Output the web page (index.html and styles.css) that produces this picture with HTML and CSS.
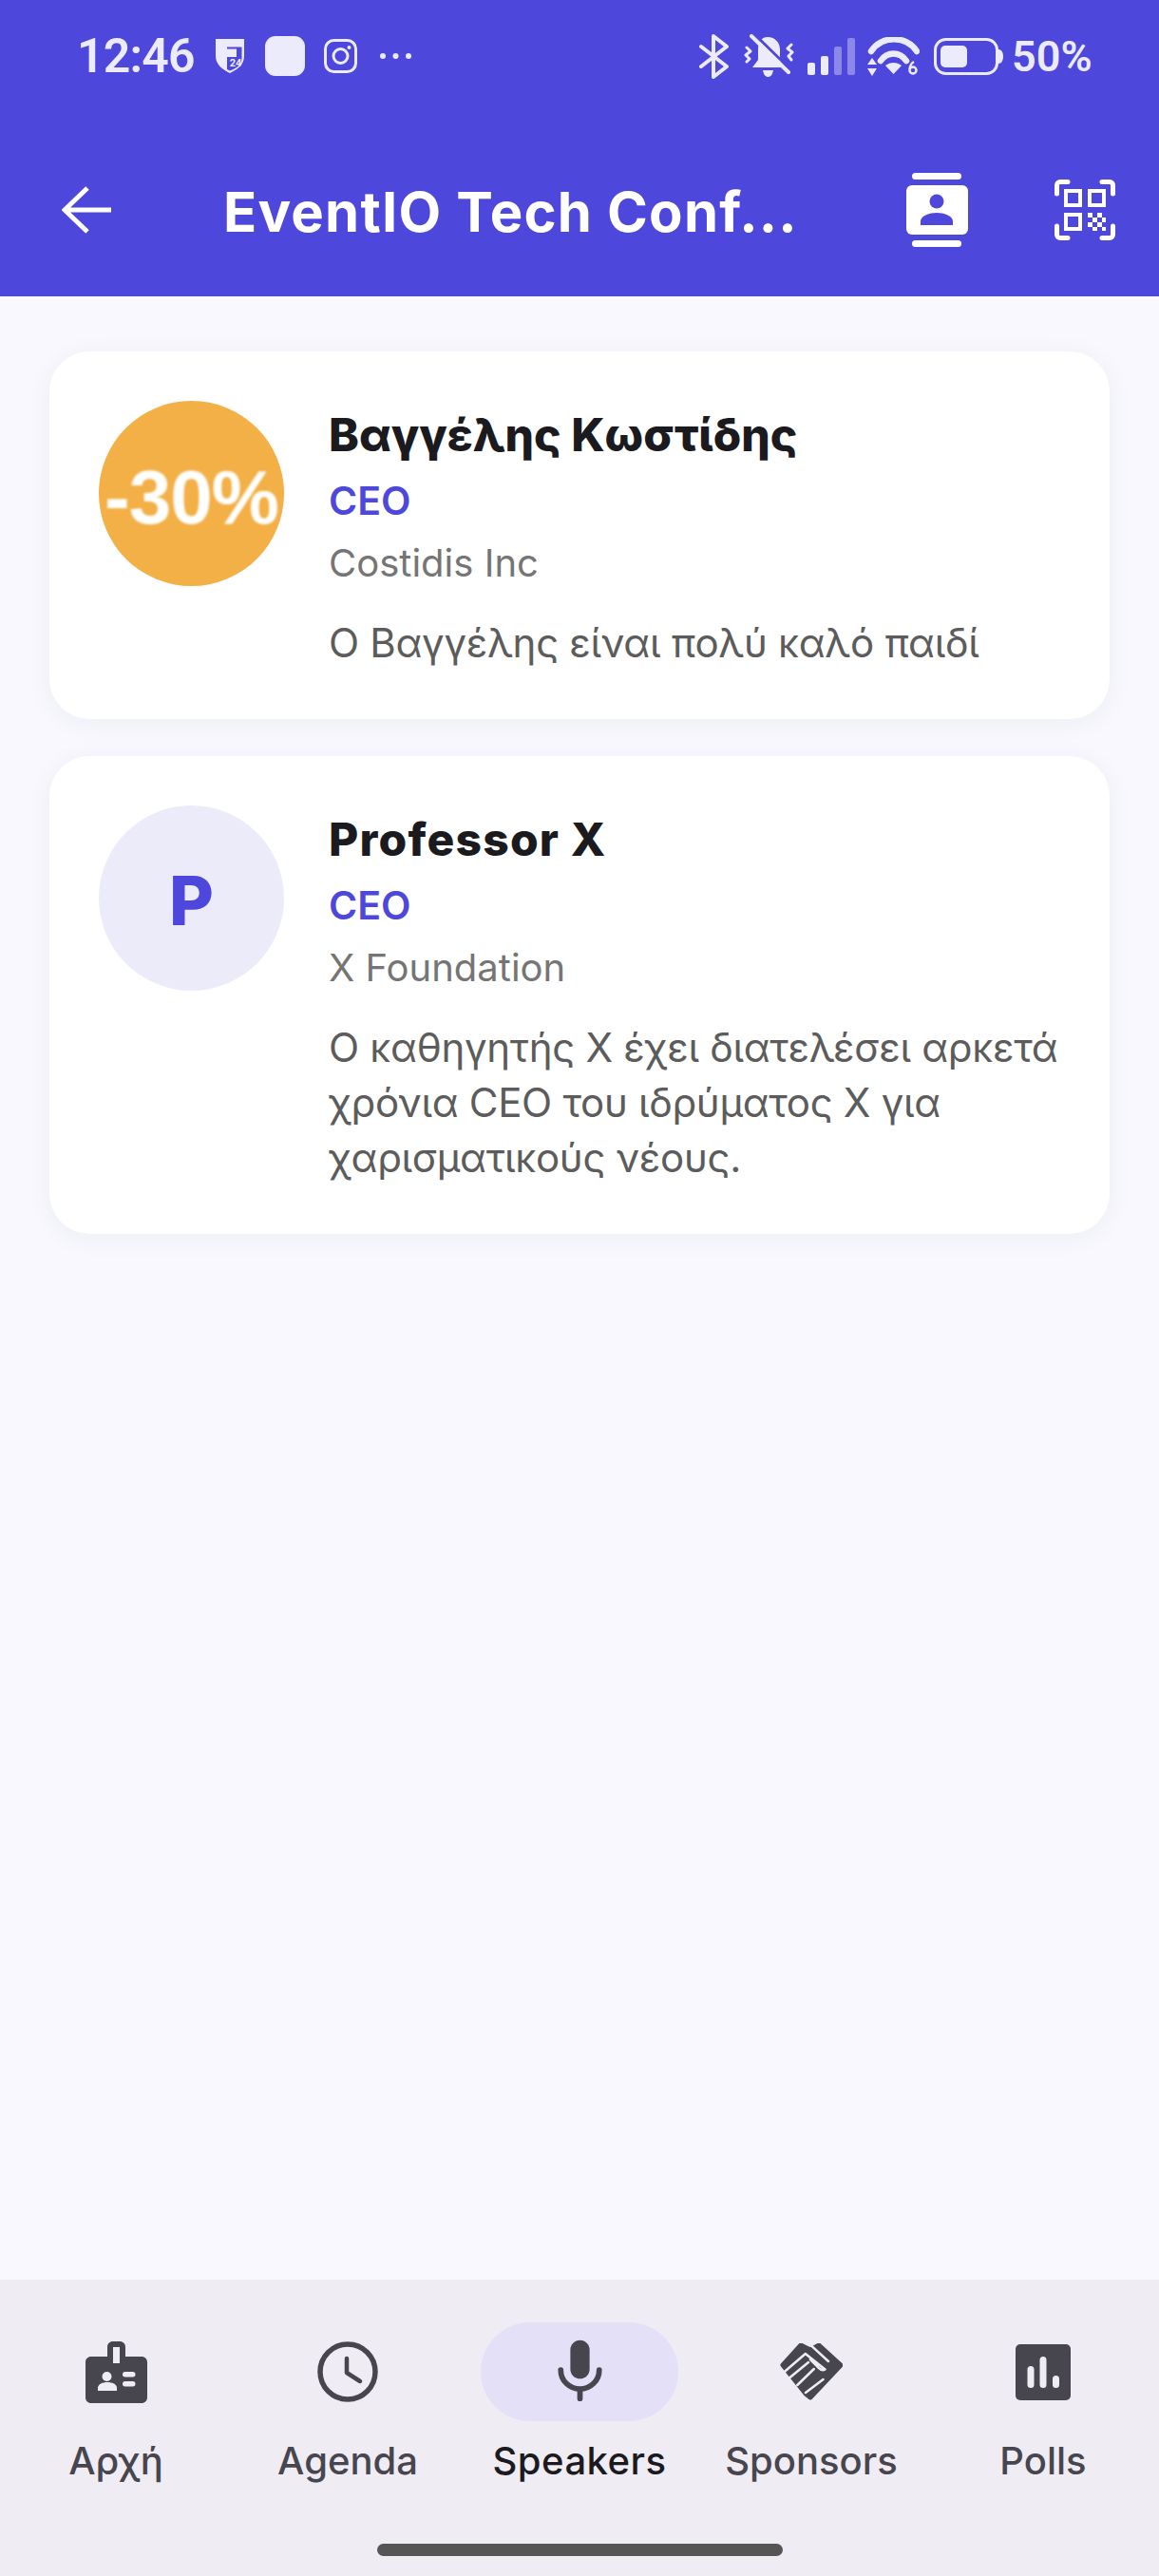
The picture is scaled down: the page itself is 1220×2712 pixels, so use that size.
FILE: index.html
```html
<!DOCTYPE html>
<html lang="el">
<head>
<meta charset="utf-8">
<title>EventIO Tech Conf</title>
<link rel="stylesheet" href="styles.css">
</head>
<body>
<div class="app">
  <header class="header">
    <div class="status">
      <span class="time">12:46</span>
      <svg class="st-shield" width="30" height="36" viewBox="0 0 30 36"><path class="lt" d="M0 0H30V18C30 27 23 32 15 36C7 32 0 27 0 18Z"/><path class="dk" d="M12 8.500H27.500V20C27.500 27 22 31 15 33.500L12 32V19H22V10.500H12Z"/><text class="st-24" x="21" y="29">24</text></svg>
      <span class="st-square"></span>
      <svg class="st-insta" width="35" height="36" viewBox="0 0 35 36"><rect class="ln" x="1.500" y="1.500" width="32" height="33" rx="9"/><circle class="ln" cx="17.500" cy="18" r="7.500"/><circle class="lt" cx="26.500" cy="9" r="2"/></svg>
      <svg class="st-dots" width="33" height="8" viewBox="0 0 33 8"><circle class="lt" cx="3" cy="4" r="3"/><circle class="lt" cx="16.500" cy="4" r="3"/><circle class="lt" cx="30" cy="4" r="3"/></svg>
      <span class="spacer"></span>
      <svg class="st-bt" width="33" height="47" viewBox="0 0 33 47"><path class="ln ln-bt" d="M3 13L30 34L16 45V2L30 13L3 34"/></svg>
      <svg class="st-bell" width="53" height="46" viewBox="0 0 53 46"><path class="lt" d="M25 3C33 3 38 9 38 16V27L43 35H9L15 27V16C15 9 18 3 25 3Z"/><path class="lt" d="M20 38H31C30 43 28 45 25.500 45S21 43 20 38Z"/><path class="slash-bg" d="M11 0L50 38"/><path class="ln ln-slash" d="M8 2L47 40"/><path class="ln ln-zig" d="M3 14L7 18L2 22L6 26L3 29"/><path class="ln ln-zig" d="M50 11L46 15L51 19L47 23L50 27"/></svg>
      <svg class="st-signal" width="51" height="39" viewBox="0 0 51 39"><rect class="lt" x="0" y="26" width="8" height="13" rx="2"/><rect class="lt" x="14" y="19" width="8" height="20" rx="2"/><rect class="lt dim" x="28" y="9" width="8" height="30" rx="2"/><rect class="lt dim" x="42" y="0" width="8" height="39" rx="2"/></svg>
      <svg class="st-wifi" width="55" height="41" viewBox="0 0 55 41"><path class="ln ln-wifi" d="M4 15C15 -2 41 -2 52 15"/><path class="ln ln-wifi" d="M14 25C21 15 34 15 41 25"/><path class="lt" d="M19 30C24 26 31 26 36 30L27.500 39Z"/><path class="lt" d="M5 22L10 29H0Z"/><path class="lt" d="M5 41L10 33H0Z"/><circle class="ln ln-six" cx="48" cy="35" r="3.500"/><path class="ln ln-six" d="M44.500 34C45 29 47 27 49 26"/></svg>
      <svg class="st-batt" width="73" height="39" viewBox="0 0 73 39"><rect class="ln" x="1.500" y="1.500" width="65" height="36" rx="11"/><rect class="lt" x="7" y="8" width="28" height="23" rx="5"/><path class="lt" d="M68 12C71 12 73 15 73 19.500S71 27 68 27Z"/></svg>
      <span class="pct">50%</span>
    </div>
    <div class="toolbar">
      <svg class="back" width="52" height="50" viewBox="0 0 52 50"><path d="M52 25H4M27 2L3 25L27 48"/></svg>
      <h1 class="title">EventIO Tech Conf...</h1>
      <svg class="tool-contacts" width="65" height="78" viewBox="0 0 65 78"><rect class="wh" x="6" y="0" width="52" height="7" rx="3.500"/><rect class="wh" x="0" y="13" width="65" height="52" rx="6"/><rect class="wh" x="6" y="71" width="52" height="7" rx="3.500"/><circle class="bg" cx="32" cy="30" r="7.500"/><path class="bg" d="M15 55V51C15 45 25 42 32 42S49 45 49 51V55Z"/></svg>
      <svg class="tool-qr" width="64" height="64" viewBox="0 0 64 64"><path class="qr" d="M2.500 15V6C2.500 4 4 2.500 6 2.500H14M50 2.500H58C60 2.500 61.500 4 61.500 6V15M61.500 49V58C61.500 60 60 61.500 58 61.500H50M14 61.500H6C4 61.500 2.500 60 2.500 58V49"/><rect class="qr-sq" x="12" y="12" width="15" height="15"/><rect class="qr-sq" x="37" y="12" width="15" height="15"/><rect class="qr-sq" x="12" y="37" width="15" height="15"/><path class="wh" d="M35 35h5v5h-5zM45 35h5v5h-5zM40 40h5v5h-5zM50 40h4v5h-4zM35 45h5v5h-5zM45 45h5v5h-5zM40 50h5v4h-5zM50 50h4v4h-4z"/></svg>
    </div>
  </header>

  <main class="list">
    <article class="card">
      <div class="avatar avatar-promo"><span class="promo">-30%</span></div>
      <div class="info">
        <h2 class="name">Βαγγέλης Κωστίδης</h2>
        <p class="role">CEO</p>
        <p class="company">Costidis Inc</p>
        <p class="desc">Ο Βαγγέλης είναι πολύ καλό παιδί</p>
      </div>
    </article>
    <article class="card">
      <div class="avatar avatar-letter">P</div>
      <div class="info">
        <h2 class="name name-latin">Professor X</h2>
        <p class="role">CEO</p>
        <p class="company">X Foundation</p>
        <p class="desc">Ο καθηγητής Χ έχει διατελέσει αρκετά<br>χρόνια CEO του ιδρύματος Χ για<br>χαρισματικούς νέους.</p>
      </div>
    </article>
  </main>

  <nav class="nav">
    <div class="nav-row">
      <div class="nav-item">
        <span class="nav-icon">
          <svg width="65" height="65" viewBox="0 0 65 65"><path class="ic" d="M29 0H36C39.500 0 42 2.500 42 6V16H59C62.500 16 65 18.500 65 22V59C65 62.500 62.500 65 59 65H6C2.500 65 0 62.500 0 59V22C0 18.500 2.500 16 6 16H23V6C23 2.500 25.500 0 29 0Z"/><rect class="nav-cut" x="29" y="6" width="7" height="17"/><circle class="nav-cut" cx="22.500" cy="37" r="5"/><path class="nav-cut" d="M13 52V49C13 45 18 43 23 43S33 45 33 49V52Z"/><rect class="nav-cut" x="39" y="32" width="13.500" height="5.500" rx="2.700"/><rect class="nav-cut" x="39" y="42" width="13.500" height="5.500" rx="2.700"/></svg>
        </span>
        <span class="nav-label">Αρχή</span>
      </div>
      <div class="nav-item">
        <span class="nav-icon">
          <svg width="64" height="64" viewBox="0 0 64 64"><circle class="ic-ln" cx="32" cy="32" r="29"/><path class="ic-hand" d="M31 18V33L45 42"/></svg>
        </span>
        <span class="nav-label">Agenda</span>
      </div>
      <div class="nav-item nav-active">
        <span class="nav-icon">
          <svg width="81" height="81" viewBox="0 0 24 24"><path class="ic" d="M12 14c1.660 0 3-1.340 3-3V5c0-1.660-1.340-3-3-3S9 3.340 9 5v6c0 1.660 1.340 3 3 3z"/><path class="ic-mic" d="M6 11.300c0 3.300 2.700 5.900 6 5.900s6-2.600 6-5.900M12 17.200V20.200"/></svg>
        </span>
        <span class="nav-label">Speakers</span>
      </div>
      <div class="nav-item">
        <span class="nav-icon">
          <svg width="66" height="60" viewBox="0 0 66 60"><path class="ic ic-shake" d="M22 2L32 7L41 2L64 23L32 57L27 53L3 23Z"/><path class="shake-cut" d="M4.700 30L26.800 11L47.500 27.500C45 29 43 28 41 26L32 17M32 1.700L51 19M10.500 36L30 20M18.300 44L35.800 27M27 52L45.500 38"/></svg>
        </span>
        <span class="nav-label">Sponsors</span>
      </div>
      <div class="nav-item">
        <span class="nav-icon">
          <svg width="58" height="59" viewBox="0 0 58 59"><rect class="ic" width="58" height="59" rx="5"/><rect class="nav-cut" x="12.500" y="23" width="7" height="23" rx="3.500"/><rect class="nav-cut" x="25.500" y="13" width="7" height="33" rx="3.500"/><rect class="nav-cut" x="39" y="33" width="7" height="13" rx="3.500"/></svg>
        </span>
        <span class="nav-label">Polls</span>
      </div>
    </div>
    <div class="home-bar"></div>
  </nav>
</div>
</body>
</html>
```

FILE: styles.css
```css
* { box-sizing: border-box; }
html, body { margin: 0; padding: 0; }
body { background: #f8f8fe; font-family: Inter, "Noto Sans", sans-serif; }
h1, h2, p { margin: 0; font-weight: inherit; font-size: inherit; }
svg { display: block; flex-shrink: 0; }

.app { width: 1220px; height: 2712px; display: flex; flex-direction: column; overflow: hidden; }

/* Header */
.header { height: 312px; background: #4e47dc; color: #fff; }
.status { height: 130px; padding: 0 71px 12px 81px; display: flex; align-items: center; color: #ecebfc; }
.time { font: 600 50px/1 Roboto, sans-serif; letter-spacing: -0.8px; width: 120px; }
.st-shield { margin-left: 26px; }
.st-square { width: 42px; height: 42px; border-radius: 11px; background: #ecebfc; margin-left: 22px; }
.st-insta { margin-left: 20px; }
.st-dots { margin-left: 24px; }
.spacer { flex: 1; }
.st-bell { margin-left: 15px; }
.st-signal { margin-left: 14px; }
.st-wifi { margin-left: 12px; }
.st-batt { margin-left: 15px; }
.pct { font: 600 45px/1 Roboto, sans-serif; margin-left: 9px; width: 84px; }
.lt { fill: #ecebfc; }
.dk { fill: #4e47dc; }
.dim { opacity: 0.4; }
.ln { fill: none; stroke: #ecebfc; stroke-width: 3; }
.ln-bt { stroke-width: 4; stroke-linejoin: round; stroke-linecap: round; }
.ln-slash { stroke-width: 4; stroke-linecap: round; }
.slash-bg { fill: none; stroke: #4e47dc; stroke-width: 3; }
.ln-zig { stroke-width: 3; stroke-linecap: round; stroke-linejoin: round; }
.ln-wifi { stroke-width: 6.500; stroke-linecap: round; }
.ln-six { stroke-width: 2.500; }
.st-24 { font: 700 11px Roboto, sans-serif; fill: #ecebfc; text-anchor: middle; }

.toolbar { height: 182px; padding-left: 65px; padding-right: 46px; display: flex; align-items: center; }
.back path { fill: none; stroke: #fff; stroke-width: 5; }
.title { flex: 1; margin-left: 118px; padding-top: 4px; font-size: 58px; font-weight: 700; letter-spacing: 1.2px; line-height: 70px; color: #fff; white-space: nowrap; }
.wh { fill: #fff; }
.bg { fill: #4e47dc; }
.tool-qr { margin-left: 91px; }
.qr { fill: none; stroke: #fff; stroke-width: 5; stroke-linecap: round; }
.qr-sq { fill: none; stroke: #fff; stroke-width: 4; }

/* Cards */
.list { flex: 1; padding: 58px 52px 0; display: flex; flex-direction: column; gap: 39px; }
.card { background: #fff; border-radius: 42px; padding: 52px 30px 51px 52px; display: flex; gap: 47px; box-shadow: 0 4px 28px rgba(30, 30, 80, 0.05); }
.avatar { width: 195px; height: 195px; border-radius: 50%; flex-shrink: 0; display: flex; align-items: center; justify-content: center; }
.avatar-promo { background: #f3b047; overflow: hidden; }
.promo { font: 700 80px/1 "Liberation Sans", sans-serif; letter-spacing: -1px; color: #fff; filter: blur(1px); padding-top: 8px; }
.avatar-letter { background: #ecebfa; color: #4e47dc; font-size: 72px; font-weight: 800; padding-top: 4px; }
.info { flex: 1; min-width: 0; padding-top: 2px; }
.name { font-size: 48px; font-weight: 800; line-height: 68px; color: #1b1b1f; }
.name-latin { letter-spacing: 1.2px; }
.role { font-size: 41px; font-weight: 600; line-height: 60px; margin-top: 5px; color: #4e47dc; }
.company { font-size: 40px; line-height: 56px; margin-top: 8px; color: #757575; }
.desc { font-size: 42px; letter-spacing: -0.3px; line-height: 58px; margin-top: 27px; color: #5c5c5c; }

/* Bottom nav */
.nav { height: 312px; background: #efedf3; padding-top: 45px; display: flex; flex-direction: column; align-items: center; }
.nav-row { width: 100%; display: grid; grid-template-columns: repeat(5, 1fr); }
.nav-item { display: flex; flex-direction: column; align-items: center; }
.nav-icon { width: 208px; height: 104px; border-radius: 52px; display: flex; align-items: center; justify-content: center; }
.nav-active .nav-icon { background: #e3e0f7; }
.nav-label { font-size: 40px; font-weight: 500; line-height: 48px; margin-top: 18px; color: #47464f; white-space: nowrap; }
.nav-active .nav-label { color: #1b1b1f; letter-spacing: 0.5px; }
.ic { fill: #47464f; }
.nav-cut { fill: #efedf3; }
.ic-ln { fill: none; stroke: #47464f; stroke-width: 5.500; }
.ic-hand { fill: none; stroke: #47464f; stroke-width: 4.500; stroke-linecap: round; stroke-linejoin: round; }
.ic-mic { fill: none; stroke: #47464f; stroke-width: 1.700; stroke-linecap: round; }
.ic-shake { stroke: #47464f; stroke-width: 5; stroke-linejoin: round; }
.shake-cut { fill: none; stroke: #efedf3; stroke-width: 2.500; stroke-linecap: round; stroke-linejoin: round; }
.home-bar { width: 427px; height: 13px; border-radius: 7px; background: #555; margin-top: 63px; }
```
